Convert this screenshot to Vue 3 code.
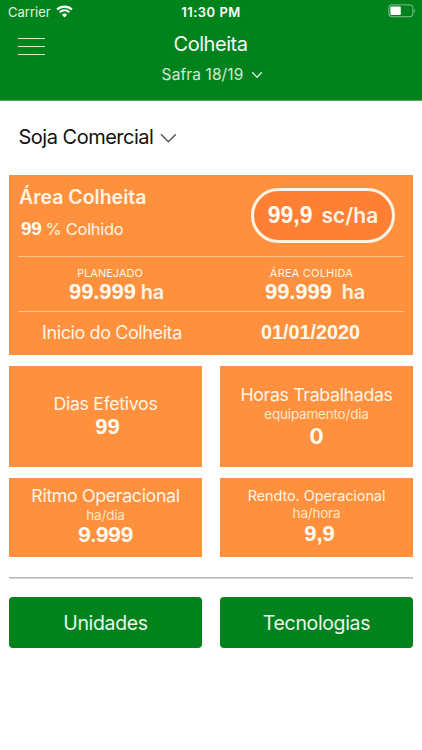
<template>
  <div class="screen">
    <header class="header">
      <div class="status">
        <div class="status-left">
          <span class="carrier">Carrier</span>
          <svg class="wifi" width="17" height="13" viewBox="0 0 17 13" fill="none">
            <path d="M1.1 4.6a10.6 10.6 0 0 1 14.8 0" stroke="#fff" stroke-width="2.1" />
            <path d="M3.7 7.3a6.9 6.9 0 0 1 9.6 0" stroke="#fff" stroke-width="2" />
            <path d="M8.5 12.4 5.9 9.7a3.8 3.8 0 0 1 5.2 0z" fill="#fff" />
          </svg>
        </div>
        <span class="clock">11:30 PM</span>
        <svg class="battery" width="28" height="14" viewBox="0 0 28 14" fill="none">
          <rect x="0.9" y="0.9" width="24" height="11.8" rx="2.8" stroke="#fff" stroke-opacity="0.5" />
          <rect x="2.4" y="2.5" width="10.4" height="8.6" rx="1.2" fill="#fff" />
          <path d="M26.3 4.8c1.2.6 1.2 3.4 0 4z" fill="#fff" fill-opacity="0.5" />
        </svg>
      </div>
      <div class="nav">
        <button class="menu" @click="menuOpen = !menuOpen"><i></i><i></i><i></i></button>
        <h1 class="title">Colheita</h1>
      </div>
      <div class="season">
        <span>Safra 18/19</span>
        <svg width="12" height="8" viewBox="0 0 12 8" fill="none">
          <path d="M1.2 1.3 6 6.2l4.8-4.9" stroke="#dff0df" stroke-width="1.3" />
        </svg>
      </div>
    </header>

    <main class="content">
      <div class="crop">
        <span>Soja Comercial</span>
        <svg width="17" height="11" viewBox="0 0 17 11" fill="none">
          <path d="m1 1.3 7.4 7.4 7.4-7.4" stroke="#555" stroke-width="1.5" />
        </svg>
      </div>

      <section class="summary">
        <div class="summary-top">
          <div>
            <h2>Área Colheita</h2>
            <p class="percent"><b class="num">99</b><span>% Colhido</span></p>
          </div>
          <div class="pill"><b class="num">99,9</b><span>sc/ha</span></div>
        </div>
        <div class="areas">
          <div class="area planned">
            <small>PLANEJADO</small>
            <p><b class="num">99.999</b><span>ha</span></p>
          </div>
          <div class="area done">
            <small>ÁREA COLHIDA</small>
            <p><b class="num">99.999</b><span>ha</span></p>
          </div>
        </div>
        <div class="start">
          <span>Inicio do Colheita</span>
          <b class="num">01/01/2020</b>
        </div>
      </section>

      <section class="cards">
        <div v-for="c in cards" :key="c.id" class="card" :class="c.id">
          <h3>{{ c.title }}</h3>
          <small v-if="c.unit">{{ c.unit }}</small>
          <b>{{ c.value }}</b>
        </div>
      </section>

      <hr />

      <div class="actions">
        <button class="units">Unidades</button>
        <button class="techs">Tecnologias</button>
      </div>
    </main>
  </div>
</template>

<script setup>
import { ref } from "vue";

const menuOpen = ref(false);

const cards = [
  { id: "days", title: "Dias Efetivos", value: "99" },
  { id: "hours", title: "Horas Trabalhadas", unit: "equipamento/dia", value: "0" },
  { id: "pace", title: "Ritmo Operacional", unit: "ha/dia", value: "9.999" },
  { id: "yield", title: "Rendto. Operacional", unit: "ha/hora", value: "9,9" },
];
</script>

<style>
body {
  margin: 0;
  background-color: #fff;
}
</style>

<style scoped>
.screen {
  width: 422px;
  height: 750px;
  overflow: hidden;
  background-color: #fff;
  font-family: Inter, "Liberation Sans", sans-serif;
  color: #fff4e4;
}
h1,
h2,
h3,
p {
  margin: 0;
  font-weight: 400;
}
small,
.card b {
  display: block;
}
svg {
  display: block;
  flex: none;
}
button {
  border: none;
  padding: 0;
  font-family: inherit;
}
.num {
  font-family: "Liberation Sans", sans-serif;
  font-weight: 700;
  color: #fffaf0;
}

/* header */
.header {
  box-sizing: border-box;
  height: 101px;
  background-color: #00821d;
  border-bottom: 1px solid #55a865;
}
.status {
  display: grid;
  grid-template-columns: 1fr auto 1fr;
  height: 24px;
  padding: 0 6px 0 8px;
  line-height: 24px;
  font-size: 13px;
  color: #fff;
}
.status-left {
  display: flex;
  gap: 5px;
}
.carrier {
  color: #e4f3e4;
}
.wifi {
  margin-top: 5px;
}
.clock {
  padding-right: 2px;
  font-weight: 600;
  letter-spacing: 0.5px;
}
.battery {
  margin-top: 4px;
  justify-self: end;
}
.nav {
  display: grid;
  grid-template-columns: 1fr auto 1fr;
  padding: 0 18px;
  margin-top: 8px;
}
.menu {
  display: flex;
  flex-direction: column;
  gap: 7px;
  width: 27px;
  padding-top: 6px;
  background: none;
}
.menu i {
  height: 1px;
  width: 27px;
  background-color: #d5ebd5;
}
.title {
  padding-right: 1px;
  font-size: 20px;
  line-height: 24px;
  letter-spacing: -0.45px;
  color: #f4fbf4;
}
.season {
  display: flex;
  justify-content: center;
  align-items: center;
  gap: 8px;
  margin-top: 9px;
  padding-left: 3px;
  font-size: 15.5px;
  line-height: 20px;
  letter-spacing: 0.1px;
  color: #d3ead4;
}

/* crop selector */
.content {
  padding: 0 9px;
}
.crop {
  display: flex;
  align-items: center;
  gap: 7px;
  height: 24px;
  padding: 23px 0 27px 9.5px;
  font-size: 20px;
  letter-spacing: -0.5px;
  color: #111;
}
.crop span {
  padding-top: 1px;
}
.crop svg {
  margin-top: 4px;
}

/* summary */
.summary {
  height: 180px;
  box-sizing: border-box;
  padding: 0 9px;
  background-color: #ff913e;
}
.summary-top {
  display: flex;
  justify-content: space-between;
  box-sizing: border-box;
  height: 82px;
  padding: 9px 9px 0 0;
  border-bottom: 1px solid #ffc28c;
}
.summary-top h2 {
  padding: 1px 0 0 1px;
  font-size: 19.5px;
  line-height: 25px;
  font-weight: 600;
}
.percent {
  display: flex;
  align-items: baseline;
  gap: 4px;
  margin-top: 7px;
  padding-left: 3px;
  font-size: 16.5px;
  line-height: 24px;
  letter-spacing: -0.3px;
}
.percent .num {
  font-size: 19px;
}
.pill {
  display: flex;
  justify-content: center;
  align-items: baseline;
  gap: 9px;
  box-sizing: border-box;
  width: 144px;
  height: 55px;
  margin-top: 4px;
  border: 3px solid #fff4e4;
  border-radius: 28px;
  background-color: #fd8035;
  font-size: 21px;
  line-height: 48px;
  font-weight: 600;
}
.pill .num {
  font-size: 23px;
}
.areas {
  display: flex;
  box-sizing: border-box;
  height: 55px;
  padding-top: 9px;
  border-bottom: 1px solid #ffc28c;
}
.area {
  flex: none;
  width: 184px;
  text-align: center;
}
.area.done {
  width: 219px;
}
.area small {
  font-size: 11px;
  line-height: 14px;
}
.area.done small {
  letter-spacing: 0.2px;
}
.area p {
  display: flex;
  justify-content: center;
  align-items: baseline;
  gap: 5px;
  margin-top: -1px;
  padding-left: 13px;
  font-size: 20px;
  line-height: 25px;
  font-weight: 600;
  letter-spacing: -0.3px;
}
.area.done p {
  gap: 10px;
  padding-left: 7px;
}
.area .num {
  font-size: 22px;
  letter-spacing: -0.1px;
}
.start {
  display: flex;
  align-items: baseline;
  padding-left: 24px;
  font-size: 18px;
  line-height: 40px;
}
.start span {
  width: 219px;
  letter-spacing: -0.4px;
}
.start .num {
  font-size: 19.8px;
}

/* cards */
.cards {
  display: grid;
  grid-template-columns: 193px 193px;
  grid-template-rows: 101px 79px;
  gap: 11px 18px;
  margin-top: 11px;
}
.card {
  box-sizing: border-box;
  background-color: #ff913e;
  text-align: center;
}
.card h3 {
  font-size: 17.8px;
  line-height: 22px;
  letter-spacing: -0.35px;
}
.card small {
  font-size: 13.5px;
  line-height: 16px;
  letter-spacing: -0.2px;
  color: #ffe6c8;
}
.card b {
  font-size: 21px;
  line-height: 24px;
  color: #fffaf0;
}
.days {
  padding: 27px 0 0;
}
.card.days b {
  padding-left: 4px;
  font-size: 22px;
}
.hours {
  padding-top: 18px;
}
.hours b {
  padding-top: 3px;
}
.pace {
  padding-top: 7px;
}
.card.pace b {
  font-size: 20px;
  letter-spacing: -0.6px;
}
.yield {
  padding-top: 7px;
}
.card.yield h3 {
  font-size: 14.5px;
  letter-spacing: -0.1px;
}
.card.yield small {
  margin-top: -2px;
}
.card.yield b {
  padding: 1px 0 0 6px;
  font-size: 22px;
}
.days b,
.yield b {
  font-family: "Liberation Sans", sans-serif;
}

hr {
  height: 2px;
  margin: 20px 0 0;
  border: none;
  background: linear-gradient(#bcbcbc 50%, #d2d2d2 50%);
}
.actions {
  display: grid;
  grid-template-columns: 193px 193px;
  gap: 18px;
  margin-top: 17.5px;
}
.actions button {
  height: 51px;
  padding-top: 1px;
  border-radius: 4px;
  background-color: #00821d;
  color: #e9f7e9;
  font-size: 19.5px;
  letter-spacing: -0.35px;
}
</style>
